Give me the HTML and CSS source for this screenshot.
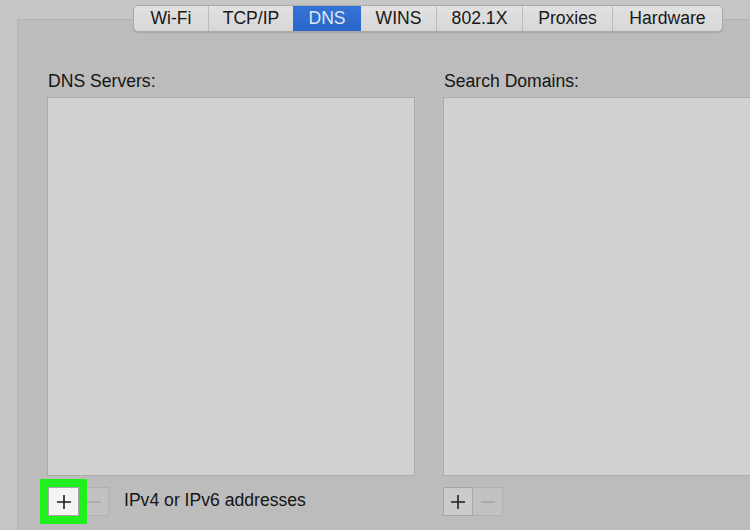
FILE: index.html
```html
<!DOCTYPE html>
<html>
<head>
<meta charset="utf-8">
<link rel="stylesheet" href="styles.css">
</head>
<body>
<div class="panel">
  <div class="tabs">
    <div class="tab t-wifi">Wi-Fi</div>
    <div class="tab t-tcp">TCP/IP</div>
    <div class="tab t-dns active">DNS</div>
    <div class="tab t-wins">WINS</div>
    <div class="tab t-8021x">802.1X</div>
    <div class="tab t-proxies">Proxies</div>
    <div class="tab t-hw">Hardware</div>
  </div>
  <div class="columns">
    <div class="col">
      <div class="label">DNS Servers:</div>
      <div class="listbox"></div>
      <div class="controls">
        <div class="btngroup">
          <div class="btn plus highlighted"><svg width="16" height="16" viewBox="0 0 16 16"><path d="M8 1v14M1 8h14" stroke="#1e1e1e" stroke-width="1.6" fill="none"/></svg></div>
          <div class="btn minus"><svg width="16" height="16" viewBox="0 0 16 16"><path d="M1 8h14" stroke="#a2a2a2" stroke-width="1.4" fill="none"/></svg></div>
        </div>
        <div class="hint">IPv4 or IPv6 addresses</div>
      </div>
    </div>
    <div class="col">
      <div class="label">Search Domains:</div>
      <div class="listbox open-right"></div>
      <div class="controls">
        <div class="btngroup">
          <div class="btn plus"><svg width="16" height="16" viewBox="0 0 16 16"><path d="M8 1v14M1 8h14" stroke="#1e1e1e" stroke-width="1.6" fill="none"/></svg></div>
          <div class="btn minus"><svg width="16" height="16" viewBox="0 0 16 16"><path d="M1 8h14" stroke="#a2a2a2" stroke-width="1.4" fill="none"/></svg></div>
        </div>
      </div>
    </div>
  </div>
</div>
</body>
</html>
```
FILE: styles.css
```css
html, body {
  margin: 0;
  padding: 0;
}
body {
  width: 750px;
  height: 530px;
  overflow: hidden;
  background: #c5c5c5;
  font-family: "Liberation Sans", Arial, sans-serif;
  color: #151515;
  padding-top: 19px;
  box-sizing: border-box;
}
.panel {
  margin-left: 17px;
  width: 733px;
  height: 511px;
  background: #bcbcbc;
  border-top: 1px solid #b1b1b1;
  border-left: 1px solid #b4b4b4;
  box-sizing: border-box;
  padding-left: 29px;
}
.tabs {
  display: flex;
  margin-top: -15px;
  margin-left: 86px;
  width: max-content;
  height: 27px;
  border: 1px solid #a9a9a9;
  border-radius: 5px;
  overflow: hidden;
  background: linear-gradient(#e1e1e1, #d7d7d7);
  box-shadow: 0 1px 1px rgba(0,0,0,0.12);
  box-sizing: border-box;
}
.tab {
  display: flex;
  align-items: center;
  justify-content: center;
  font-size: 17.6px;
  color: #181818;
  border-left: 1px solid #bcbcbc;
  box-sizing: border-box;
}
.tab:first-child { border-left: none; }
.t-wifi { width: 74px; }
.t-tcp { width: 85px; }
.t-dns { width: 68px; }
.t-wins { width: 75px; }
.t-8021x { width: 86px; }
.t-proxies { width: 90px; }
.t-hw { width: 110px; }
.tab.active {
  background: linear-gradient(#3474d4, #2a66c8);
  color: #dfe7f4;
  border-left: none;
}
.tab.active + .tab { border-left: none; }
.columns {
  display: grid;
  grid-template-columns: 368px 307px;
  column-gap: 28px;
  margin-top: 39px;
}
.col {
  display: flex;
  flex-direction: column;
}
.label {
  font-size: 17.6px;
  line-height: 20px;
  padding-left: 1px;
  color: #151515;
}
.listbox {
  margin-top: 6px;
  height: 379px;
  background: #d1d1d1;
  border: 1px solid #acacac;
  box-sizing: border-box;
}
.listbox.open-right {
  border-right: none;
}
.controls {
  display: flex;
  align-items: center;
  margin-top: 11px;
}
.btngroup {
  display: flex;
}
.btn {
  width: 30px;
  height: 29px;
  display: flex;
  align-items: center;
  justify-content: center;
  box-sizing: border-box;
  border: 1px solid #a6a6a6;
  background: #cbcbcb;
}
.btn.minus {
  border-left: none;
  background: #c2c2c2;
  border-color: #b0b0b0;
}
.col:first-child .btn.plus {
  width: 31px;
  margin-left: 1px;
}
.btn.highlighted {
  background: #f4f4f4;
  outline: 8px solid #20f020;
  position: relative;
  z-index: 1;
}
.hint {
  margin-left: 15px;
  font-size: 17.6px;
  line-height: 20px;
  padding-bottom: 4px;
  color: #151515;
}
```
